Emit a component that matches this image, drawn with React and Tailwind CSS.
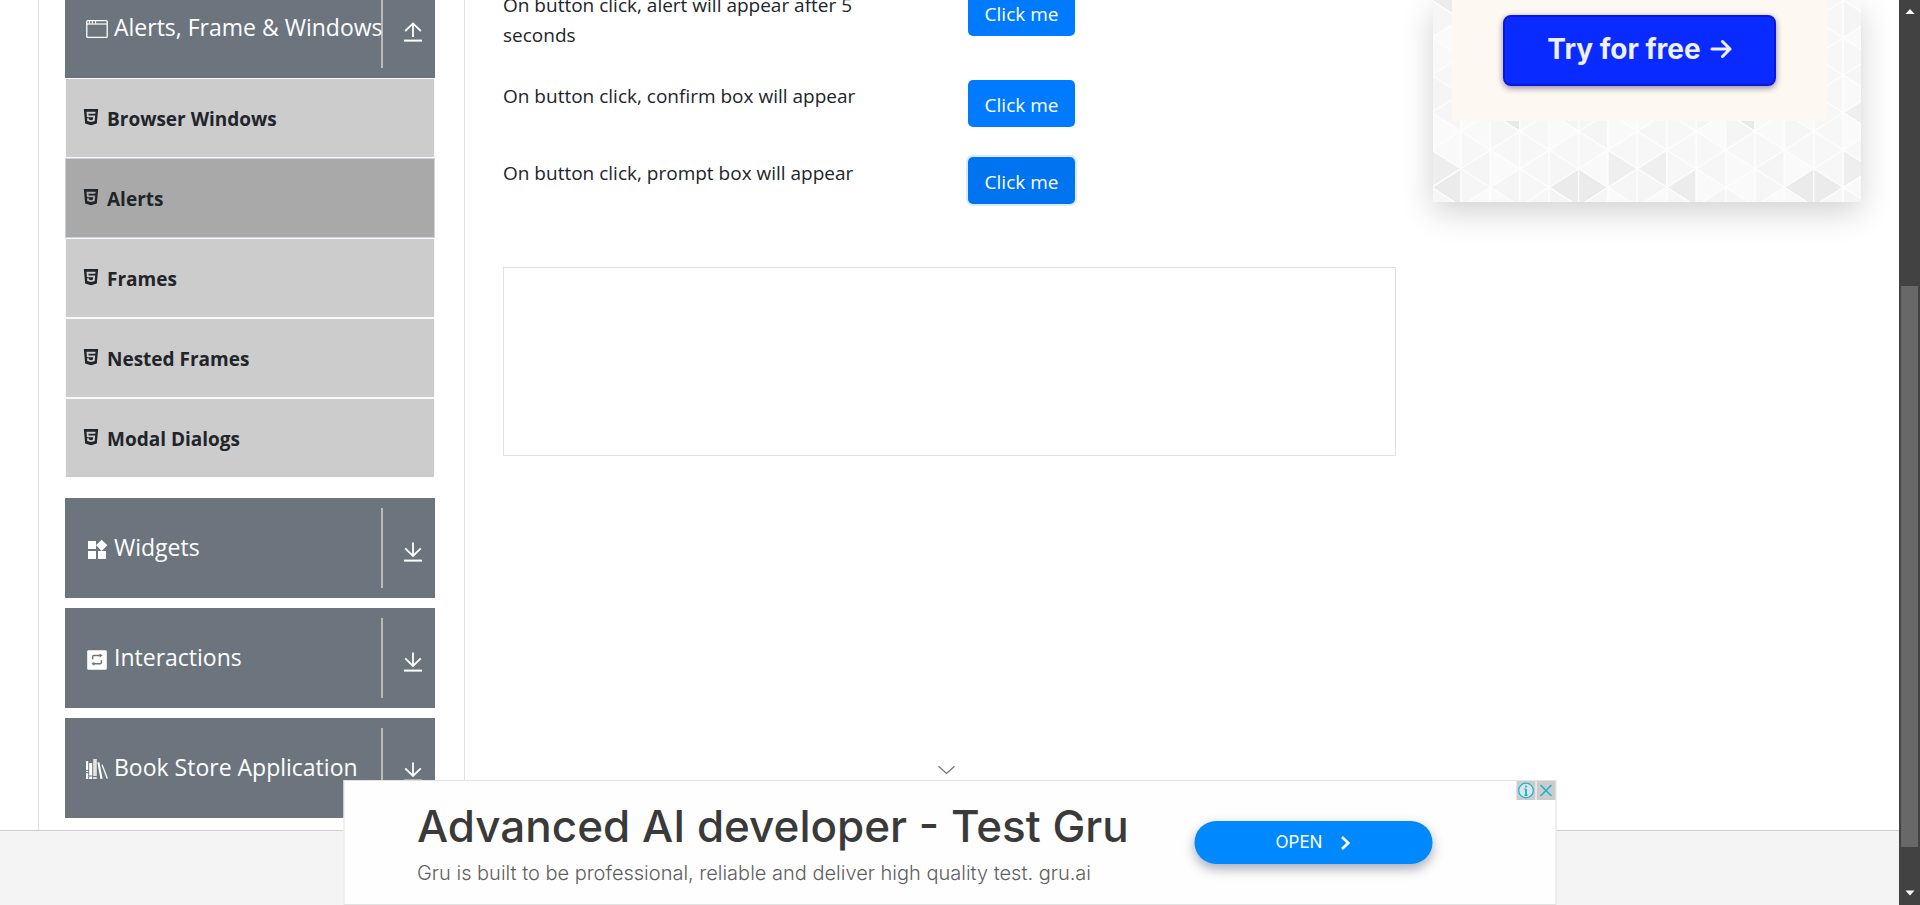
import React from "react";
import { AiFillHtml5 } from "react-icons/ai";
import { MdWidgets } from "react-icons/md";

const PAGE_FONT = "font-['Open_Sans','Noto_Sans',sans-serif]";

function WindowIcon() {
  return (
    <svg className="h-6 w-[22px] shrink-0" viewBox="0 0 22 24" fill="none" stroke="currentColor" aria-hidden="true">
      <rect x="0.8" y="4.6" width="20.4" height="16.8" rx="1" strokeWidth="1.3" />
      <path d="M1 8h20" strokeWidth="1.2" />
      <path d="M3.4 5v2.6M6.4 5v2.6M9.6 5v2.6" strokeWidth="1" />
    </svg>
  );
}

function RepeatIcon() {
  return (
    <svg className="h-6 w-[22px] shrink-0" viewBox="0 0 22 24" aria-hidden="true">
      <rect x="1.2" y="4.2" width="19.6" height="19.6" rx="1.2" fill="currentColor" />
      <g fill="none" stroke="#6c757d" strokeWidth="1.5">
        <path d="M6.6 13.2v-2.4q0-1.2 1.2-1.2h6.4" />
        <path d="M15.4 14.2v2.4q0 1.2-1.2 1.2H7.8" />
      </g>
      <path d="M13.6 7.6l3 2-3 2zM8.4 15.8l-3 2 3 2z" fill="#6c757d" />
    </svg>
  );
}

function BooksIcon() {
  return (
    <svg className="h-6 w-[22px] shrink-0" viewBox="0 0 22 24" fill="currentColor" aria-hidden="true">
      <path d="M0 5h2.2v9H0zM0 15h2.2v1H0zM0 17.2h2.2v5.8H0z" />
      <path d="M3.2 7h3v12.6h-3zM3.2 20.6h3V23h-3z" />
      <path d="M7.2 3h3.6v17H7.2zM7.2 21h3.6v2H7.2z" opacity="0.8" />
      <path d="M11.4 6.6l2-.3 3.2 16.4-2.2.3z" />
      <path d="M15.4 9l1.2-.8 5.4 14-1.4.6z" opacity="0.9" />
    </svg>
  );
}

function ArrowIcon({ up }) {
  return (
    <svg className="h-5 w-[18px]" viewBox="0 0 18 20" fill="none" stroke="currentColor" strokeWidth="1.8" aria-hidden="true">
      <path d={up ? "M9 15V1.6M1.2 9L9 1.4L16.8 9" : "M9 0.4V14M1.2 6.4L9 14L16.8 6.4"} />
      <path d="M0 18.6h18" strokeWidth="2" />
    </svg>
  );
}

function GroupHeader({ icon, label, open }) {
  return (
    <button type="button" aria-expanded={!!open} className="flex h-[100px] w-full items-center bg-[#6c757d] text-left text-white">
      <span className="flex h-20 min-w-0 flex-1 items-center gap-[6px] border-r-2 border-[#b9b9b5] pl-[21px]">
        {icon}
        <span className="pb-[2px] text-[23px] leading-[30px] whitespace-nowrap">{label}</span>
      </span>
      <span className="flex w-[52px] shrink-0 justify-center pt-2 pl-[9px] pr-[1px]">
        <ArrowIcon up={open} />
      </span>
    </button>
  );
}

const MENU = ["Browser Windows", "Alerts", "Frames", "Nested Frames", "Modal Dialogs"];

function Sidebar() {
  return (
    <nav className={`${PAGE_FONT} ml-[38px] w-[426px] shrink-0 border-l border-[#dee2e6] pl-[26px] pr-[29px]`}>
      <div className="-mt-[22px]">
        <GroupHeader icon={<WindowIcon />} label="Alerts, Frame &amp; Windows" open />
        <ul className="mb-5">
          {MENU.map((item) => (
            <li
              key={item}
              className={
                item === "Alerts"
                  ? "h-20 border border-[#ced4da] bg-[#a9a9a9]"
                  : "h-20 border border-[#f8f9fa] bg-[#ccc]"
              }
            >
              <a href="#" className="flex h-full items-center gap-[6px] pt-[2px] pl-[15px] text-[19px] font-bold text-[#212529]">
                <AiFillHtml5 className="mb-1 size-5" />
                {item}
              </a>
            </li>
          ))}
        </ul>
        <div className="flex flex-col gap-[10px]">
          <GroupHeader icon={<MdWidgets className="-mx-px mt-1 size-6" />} label="Widgets" />
          <GroupHeader icon={<RepeatIcon />} label="Interactions" />
          <GroupHeader icon={<BooksIcon />} label="Book Store Application" />
        </div>
      </div>
    </nav>
  );
}

const ROWS = [
  { id: "timer", text: "On button click, alert will appear after 5 seconds" },
  { id: "confirm", text: "On button click, confirm box will appear" },
  { id: "prompt", text: "On button click, prompt box will appear", focused: true },
];

function Content() {
  return (
    <main className={`${PAGE_FONT} min-w-0 flex-1 border-l border-[#dee2e6] pl-[38px] text-[19px] leading-[30px] text-[#212529]`}>
      <div className="-mt-[11px] flex flex-col gap-[30px]">
        {ROWS.map((row) => (
          <div key={row.id} className="flex items-start">
            <span id={row.id} className="w-[465px] pt-px pr-[90px]">{row.text}</span>
            <button
              type="button"
              aria-describedby={row.id}
              className={
                row.focused
                  ? "h-[47px] w-[107px] rounded-[5px] bg-[#0074f0] pt-[2px] text-white shadow-[0_0_0_2px_rgba(0,123,255,0.15)]"
                  : "h-[47px] w-[107px] rounded-[5px] bg-[#007bff] pt-[2px] text-white"
              }
            >
              Click me
            </button>
          </div>
        ))}
      </div>
      <div className="mt-[63px] h-[189px] border border-[#dee2e6]" />
    </main>
  );
}

const COL = 29.4;
const HALF = 18.7;
const SHADES = ["#f6f6f6", "#f9f9f9", "#f5f5f5", "#fafafa", "#f7f7f7"];
const DARK = {
  "-1:5:L": "#ebebeb", "3:5:L": "#ebebeb", "4:5:R": "#ebebeb", "7:5:L": "#ececec",
  "11:5:L": "#ebebeb", "12:5:R": "#ebebeb", "5:4:R": "#efefef", "6:4:L": "#efefef",
  "13:4:R": "#eeeeee", "1:1:L": "#e9e9e9", "9:1:L": "#e9e9e9", "-1:-5:L": "#ececec",
  "-1:4:R": "#eeeeee", "13:1:L": "#efefef",
};

function Mosaic() {
  const shapes = [];
  for (let c = -1; c < 15; c++) {
    for (let r = -6; r < 7; r++) {
      const x = 28 + c * COL;
      const y = 94 + r * HALF;
      const tipLeft = (c + r) % 2 === 0;
      const side = tipLeft ? "L" : "R";
      const points = tipLeft
        ? `${x},${y} ${x + COL},${y - HALF} ${x + COL},${y + HALF}`
        : `${x + COL},${y} ${x},${y - HALF} ${x},${y + HALF}`;
      const shade = DARK[`${c}:${r}:${side}`] || SHADES[Math.abs(c * 7 + r * 3 + c * r) % 5];
      shapes.push(<polygon key={`${c}:${r}`} points={points} fill={shade} />);
    }
  }
  return (
    <svg className="absolute inset-0 size-full" viewBox="0 0 428 202" preserveAspectRatio="none" stroke="#fdfdfd" strokeWidth="1.3" aria-hidden="true">
      {shapes}
    </svg>
  );
}

function SideAd() {
  return (
    <aside className="mr-[38px] ml-[37px] w-[428px] shrink-0">
      <div className="relative h-[202px] bg-[#f8f8f8] px-[19px] shadow-[0_10px_30px_rgba(0,0,0,0.18)]">
        <Mosaic />
        <div className="relative mr-[15px] h-[121px] bg-[#fdf8f1] px-[51px] pt-[15px]">
          <a
            href="#"
            className="flex h-[71px] items-center justify-center gap-[9px] rounded-lg border-2 border-[#0a18dc] bg-[#0a2bff] pb-[3px] font-['Inter',sans-serif] text-[28px] font-bold text-[#eef0ff] shadow-[0_2px_6px_rgba(0,0,60,0.45)]"
          >
            Try for free
            <svg className="h-5 w-[22px]" viewBox="0 0 22 20" fill="none" stroke="currentColor" strokeWidth="3" strokeLinecap="round" strokeLinejoin="round" aria-hidden="true">
              <path d="M2 10h18M12.5 2.5L20 10l-7.5 7.5" />
            </svg>
          </a>
        </div>
      </div>
    </aside>
  );
}

function BannerAd() {
  return (
    <section className="absolute bottom-0 left-1/2 w-[1213px] max-w-full -translate-x-1/2 font-['Inter',sans-serif]">
      <button type="button" aria-label="Collapse" className="mx-auto mb-[5px] flex h-[10px] w-6 items-center justify-start text-[#777]">
        <svg className="h-[10px] w-[18px]" viewBox="0 0 18 10" fill="none" stroke="currentColor" strokeWidth="1.4" aria-hidden="true">
          <path d="M1 1.2L9 8.4L17 1.2" />
        </svg>
      </button>
      <div className="relative flex h-[125px] items-center border border-[#e2e2e2] bg-[#fefefe] pl-[73px]">
        <div className="w-[777px] shrink-0 whitespace-nowrap">
          <div className="text-[44px] leading-[54px] font-medium text-[#3a3a3a]">Advanced AI developer - Test Gru</div>
          <div className="mt-[6px] text-[20px] leading-7 font-light text-[#5f5f5f]">
            Gru is built to be professional, reliable and deliver high quality test. gru.ai
          </div>
        </div>
        <a
          href="#"
          className="flex h-[43px] w-[238px] items-center justify-center gap-[18px] rounded-full bg-[#0088ff] text-[17px] text-white shadow-[0_5px_12px_rgba(40,45,80,0.4)]"
        >
          OPEN
          <svg className="h-[14px] w-[10px]" viewBox="0 0 10 14" fill="none" stroke="currentColor" strokeWidth="2.6" aria-hidden="true">
            <path d="M1.5 1L7.8 7l-6.3 6" />
          </svg>
        </a>
        <div className="absolute top-0 right-0 flex gap-px text-[#1fb4cc]">
          <button type="button" aria-label="Ad information" className="size-[19px] bg-[#ccc]">
            <svg className="size-[19px]" viewBox="0 0 19 19" aria-hidden="true">
              <circle cx="9.5" cy="9.5" r="7.3" fill="#dce6e8" stroke="currentColor" strokeWidth="1.3" />
              <path d="M9.5 4.6v2M9.5 8v6.2M8 14.2h3M8 8.3h1.5" stroke="currentColor" strokeWidth="1.8" />
            </svg>
          </button>
          <button type="button" aria-label="Close ad" className="size-[19px] bg-[#ccc]">
            <svg className="size-[19px]" viewBox="0 0 19 19" fill="none" stroke="currentColor" strokeWidth="1.6" aria-hidden="true">
              <path d="M4 4l11 11M15 4L4 15" />
            </svg>
          </button>
        </div>
      </div>
    </section>
  );
}

function ScrollBar() {
  return (
    <div className="flex w-[21px] shrink-0 flex-col items-center bg-[#424242] pt-2 pb-[9px]" aria-hidden="true">
      <svg className="h-[6px] w-[10px]" viewBox="0 0 10 6" fill="#fff"><path d="M5 1l4.5 5h-9z" /></svg>
      <div className="flex w-full flex-1 flex-col pl-[2px] pr-[2px]">
        <div className="flex-[272]" />
        <div className="flex-[561] bg-[#686868]" />
        <div className="flex-[43]" />
      </div>
      <svg className="h-[6px] w-[10px]" viewBox="0 0 10 6" fill="#fff"><path d="M5 5.5l4.5-5h-9z" /></svg>
    </div>
  );
}

export default function App() {
  return (
    <div className="flex h-screen overflow-hidden bg-white">
      <div className="relative flex min-w-0 flex-1 flex-col overflow-hidden">
        <div className="flex min-h-0 flex-1">
          <Sidebar />
          <Content />
          <SideAd />
        </div>
        <footer className="h-[75px] shrink-0 border-t border-[#ccc] bg-[#f4f4f4]" />
        <BannerAd />
      </div>
      <ScrollBar />
    </div>
  );
}
